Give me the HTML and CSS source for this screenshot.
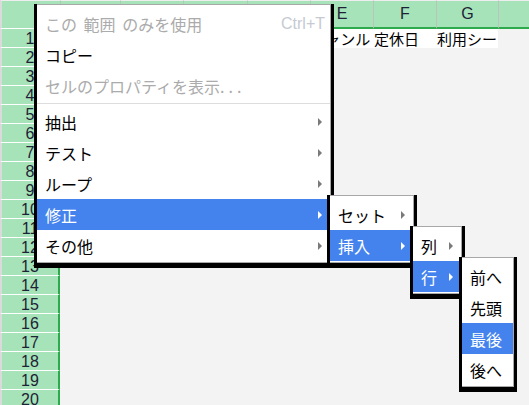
FILE: index.html
```html
<!DOCTYPE html>
<html lang="ja">
<head>
<meta charset="utf-8">
<title>Sheet</title>
<link rel="stylesheet" href="styles.css">
</head>
<body>
<div class="sheet">
  <div class="corner"></div>
  <div class="ch"></div>
  <div class="ch"></div>
  <div class="ch"></div>
  <div class="ch"></div>
  <div class="ch">E</div>
  <div class="ch">F</div>
  <div class="ch">G</div>
  <div class="ch"></div>

  <div class="rn">1</div>
  <div class="cell"></div>
  <div class="cell"></div>
  <div class="cell"></div>
  <div class="cell"></div>
  <div class="cell">ジャンル</div>
  <div class="cell">定休日</div>
  <div class="cell">利用シーン</div>
  <div class="rn">2</div>
  <div class="rn">3</div>
  <div class="rn">4</div>
  <div class="rn">5</div>
  <div class="rn">6</div>
  <div class="rn">7</div>
  <div class="rn">8</div>
  <div class="rn">9</div>
  <div class="rn">10</div>
  <div class="rn">11</div>
  <div class="rn">12</div>
  <div class="rn">13</div>
  <div class="rn">14</div>
  <div class="rn">15</div>
  <div class="rn">16</div>
  <div class="rn">17</div>
  <div class="rn">18</div>
  <div class="rn">19</div>
  <div class="rn">20</div>
</div>

<div class="menu menu-main">
  <div class="menu-body">
    <div class="item disabled"><span class="spaced">この 範囲 のみを使用</span><span class="shortcut">Ctrl+T</span></div>
    <div class="item">コピー</div>
    <div class="item disabled"><span>セルのプロパティを表示<span class="dots">...</span></span></div>
    <div class="sep"></div>
    <div class="item"><span>抽出</span><i class="arrow"></i></div>
    <div class="item"><span>テスト</span><i class="arrow"></i></div>
    <div class="item"><span>ループ</span><i class="arrow"></i></div>
    <div class="item active"><span>修正</span><i class="arrow"></i></div>
    <div class="item"><span>その他</span><i class="arrow"></i></div>
  </div>
</div>

<div class="menu menu-sub1">
  <div class="menu-body">
    <div class="item"><span>セット</span><i class="arrow"></i></div>
    <div class="item active"><span>挿入</span><i class="arrow"></i></div>
  </div>
</div>

<div class="menu menu-sub2">
  <div class="menu-body">
    <div class="item"><span>列</span><i class="arrow"></i></div>
    <div class="item active"><span>行</span><i class="arrow"></i></div>
  </div>
</div>

<div class="menu menu-sub3">
  <div class="menu-body">
    <div class="item">前へ</div>
    <div class="item">先頭</div>
    <div class="item active">最後</div>
    <div class="item">後へ</div>
  </div>
</div>
</body>
</html>
```

FILE: styles.css
```css
html, body {
  margin: 0;
  padding: 0;
  background: #f3f3f3;
  overflow: hidden;
}

body {
  width: 529px;
  height: 405px;
  position: relative;
  font-family: "Liberation Sans", Arial, sans-serif;
}

.sheet {
  display: grid;
  grid-template-columns: 60px 60px 63px 64px 63px 63px 63px 62px 100px;
  grid-template-rows: 29px;
  grid-auto-rows: 19px;
  background: #f3f3f3;
}

.corner {
  box-sizing: border-box;
  background: #a6e3b8;
  border-top: 1px solid #eeeeee;
  border-left: 2px solid #dadada;
  border-bottom: 1px solid #ffffff;
}

.ch {
  box-sizing: border-box;
  background: #a6e3b8;
  border-top: 1px solid #eeeeee;
  border-left: 1px solid #b8c4bc;
  border-bottom: 2px solid #2caa4c;
  display: flex;
  align-items: center;
  justify-content: center;
  font-size: 16px;
  color: #1e2236;
}

.rn {
  grid-column: 1;
  box-sizing: border-box;
  background: #a6e3b8;
  border-left: 2px solid #dadada;
  border-right: 2px solid #2caa4c;
  border-bottom: 1px solid #ffffff;
  text-align: center;
  font-size: 16px;
  line-height: 19px;
  color: #1e2236;
}

.cell {
  background: #ffffff;
  padding-left: 1px;
  overflow: hidden;
  white-space: nowrap;
  font-family: "Noto Sans CJK JP", sans-serif;
  font-size: 15px;
  line-height: 19px;
  color: #000;
}

/* ---------- menus ---------- */
.menu {
  position: absolute;
  box-sizing: border-box;
  border-left: 3px solid #000;
  border-right: 3px solid #000;
  border-bottom: 5px solid #000;
  font-family: "Noto Sans CJK JP", sans-serif;
  font-size: 16px;
}

.menu-body {
  background: #ffffff;
  border-top: 1px solid #a8a8a8;
  border-right: 1px solid #a8a8a8;
  border-bottom: 1px solid #a8a8a8;
  padding: 3px 0 1px;
}

.menu-main { left: 34px; top: 4px; width: 300px; }
.menu-sub1 { left: 327px; top: 195px; width: 90px; }
.menu-sub2 { left: 410px; top: 226px; width: 55px; }
.menu-sub3 { left: 459px; top: 257px; width: 58px; }

.item {
  display: flex;
  align-items: center;
  justify-content: space-between;
  height: 31px;
  padding: 0 8px;
  color: #000;
  white-space: nowrap;
}

.item.disabled { color: #ababab; }

.item.active {
  background: #4483ee;
  color: #ffffff;
}

.spaced { word-spacing: 3px; }

.dots { letter-spacing: 4px; }

.shortcut {
  font-family: "Liberation Sans", Arial, sans-serif;
  color: #c6cad2;
  margin-right: -3px;
}

.arrow {
  display: block;
  width: 0;
  height: 0;
  border-left: 4px solid #7a7a7a;
  border-top: 4px solid transparent;
  border-bottom: 4px solid transparent;
}

.item.active .arrow { border-left-color: #ffffff; }

.sep {
  height: 1px;
  margin: 2px 0;
  background: #dddddd;
}
```
